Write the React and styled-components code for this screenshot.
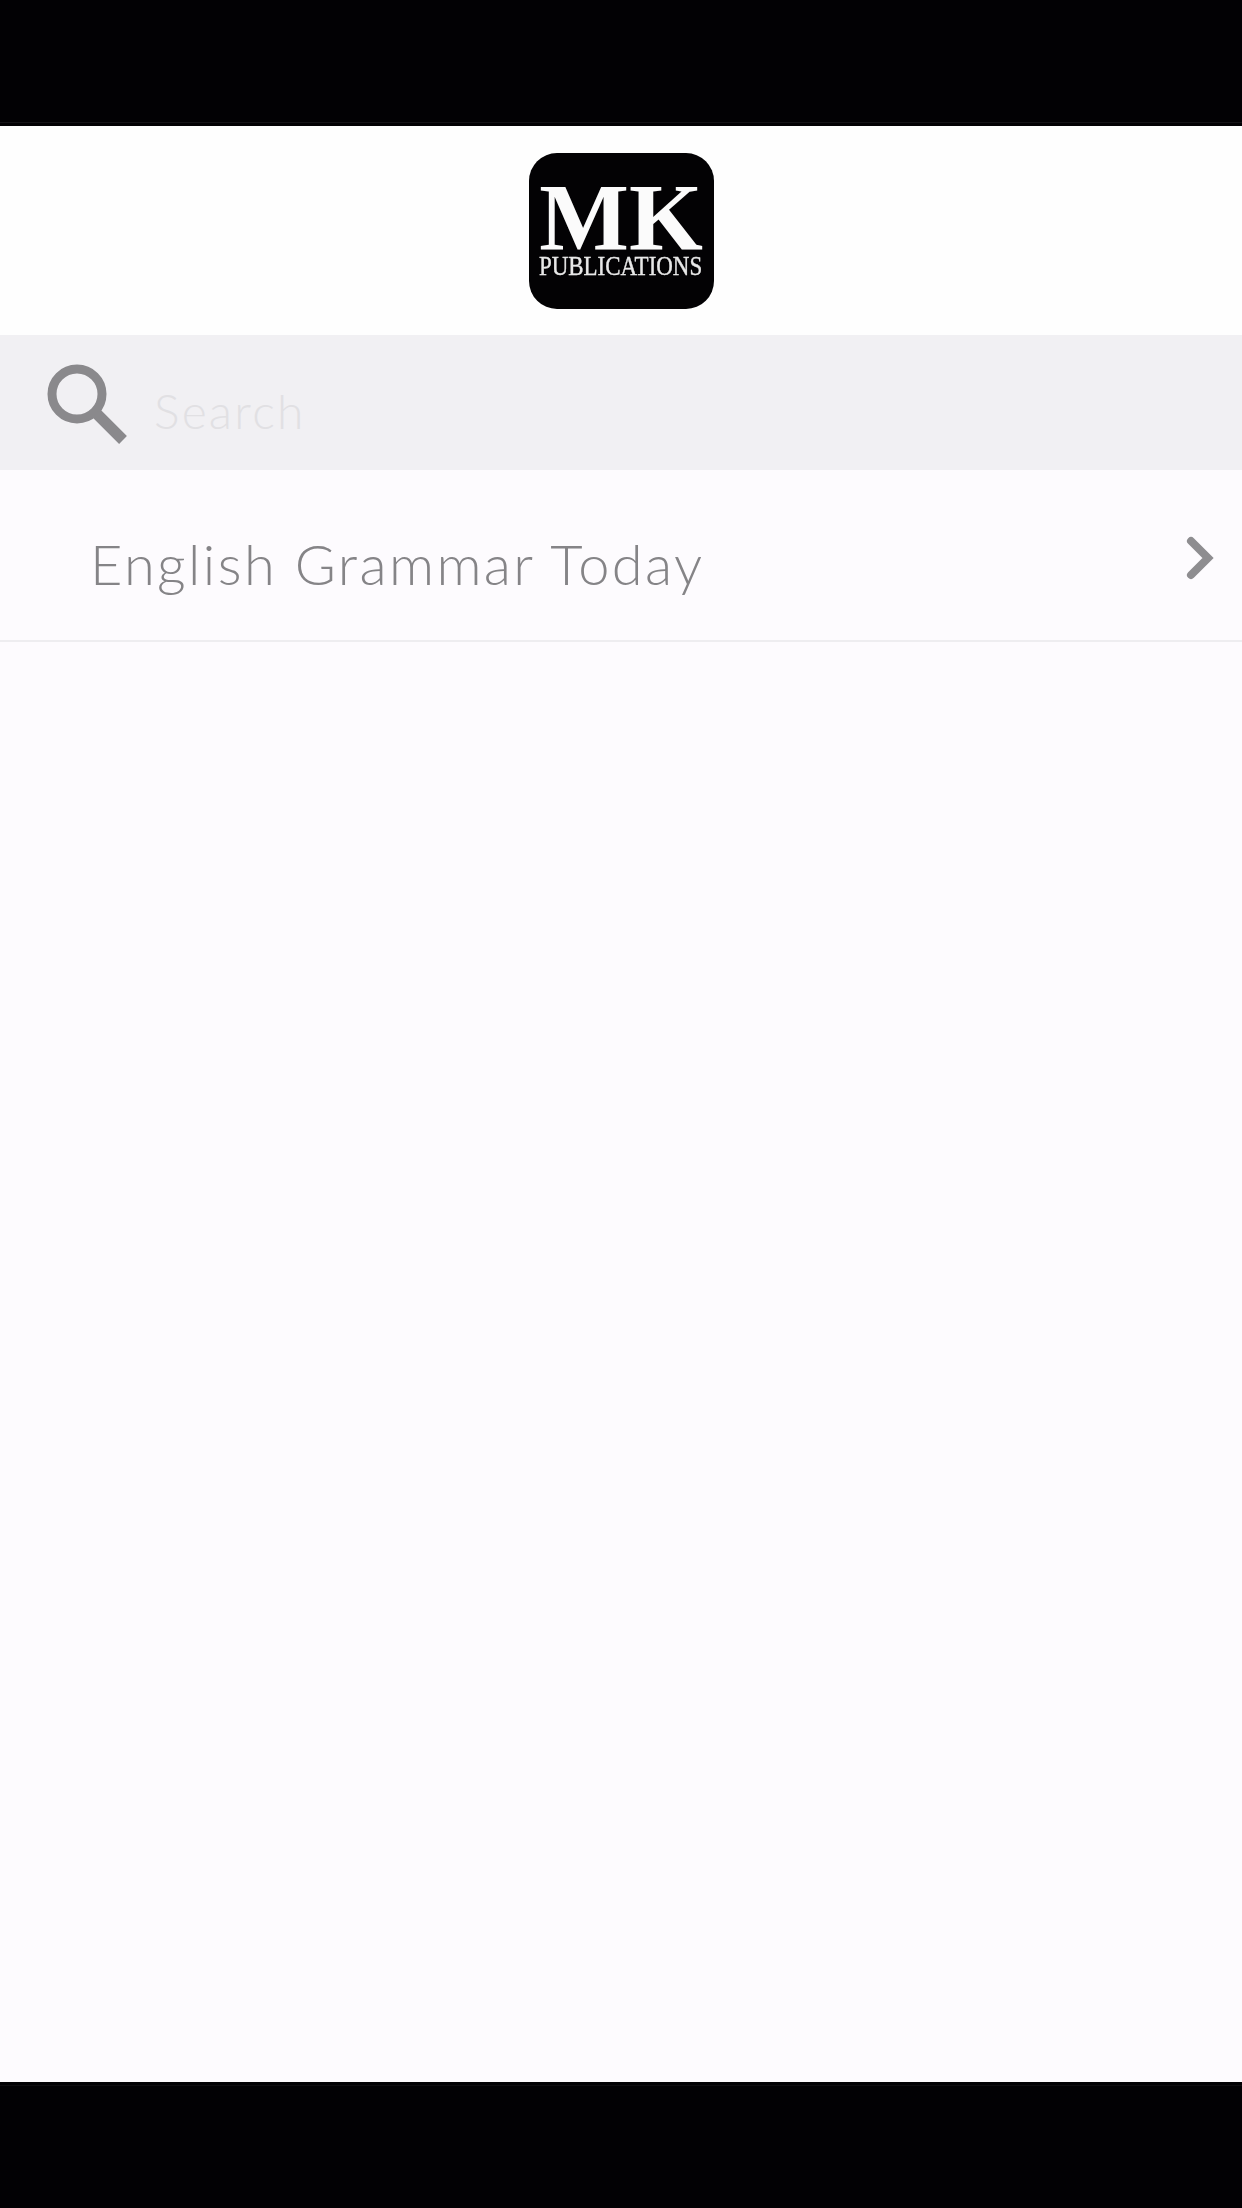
import styled, { createGlobalStyle } from "styled-components";

const GlobalStyle = createGlobalStyle`
  html, body {
    margin: 0;
    padding: 0;
    background: #020104;
  }
  * {
    box-sizing: border-box;
  }
`;

const Screen = styled.div`
  width: 1242px;
  height: 2208px;
  display: flex;
  flex-direction: column;
  background: #fdfbfe;
  font-family: "Lato", "Liberation Sans", sans-serif;
`;

const TopBar = styled.div`
  height: 126px;
  flex: none;
  background: #020104;
  padding-top: 122px;

  &::before {
    content: "";
    display: block;
    height: 1px;
    background: #141316;
  }
`;

const BottomBar = styled.div`
  height: 126px;
  flex: none;
  background: #020104;
  padding-top: 3px;

  &::before {
    content: "";
    display: block;
    height: 1px;
    background: #0e0d10;
  }
`;

const Header = styled.header`
  height: 209px;
  flex: none;
  display: flex;
  align-items: center;
  justify-content: center;
  background: #fefefe;
`;

const Logo = styled.div`
  width: 185px;
  height: 156px;
  margin-top: 1px;
  padding-top: 29px;
  border-radius: 28px;
  background: #030204;
  color: #fbfbfb;
  display: flex;
  flex-direction: column;
  align-items: center;
  font-family: "Liberation Serif", serif;
  white-space: nowrap;
  filter: blur(0.5px);
`;

const LogoMark = styled.div`
  font-size: 95px;
  font-weight: 700;
  line-height: 72px;
`;

const LogoName = styled.div`
  margin-top: -1px;
  font-size: 28px;
  line-height: 26px;
  color: #e8e8e8;
  -webkit-text-stroke: 0.4px #e8e8e8;
  transform: scaleX(0.82);
`;

const SearchBar = styled.div`
  height: 135px;
  flex: none;
  display: flex;
  align-items: flex-start;
  gap: 26px;
  padding: 28px 0 0 46px;
  background: #f1f0f3;
`;

const SearchPlaceholder = styled.div`
  margin-top: 19px;
  font-size: 48px;
  line-height: 58px;
  font-weight: 300;
  letter-spacing: 2.2px;
  color: #e1e0e3;
`;

const ListRow = styled.div`
  height: 172px;
  flex: none;
  display: flex;
  align-items: flex-start;
  justify-content: space-between;
  padding: 62px 26px 0 90px;
  border-bottom: 2px solid #eeedf0;
`;

const RowTitle = styled.div`
  font-size: 56px;
  line-height: 64px;
  font-weight: 300;
  letter-spacing: 2.4px;
  color: #858487;
`;

const Chevron = styled.svg`
  width: 32px;
  height: 44px;
  margin-top: 4px;
  flex: none;
`;

const Empty = styled.main`
  flex: 1;
`;

export default function App() {
  return (
    <Screen>
      <GlobalStyle />
      <TopBar />
      <Header>
        <Logo>
          <LogoMark>MK</LogoMark>
          <LogoName>PUBLICATIONS</LogoName>
        </Logo>
      </Header>
      <SearchBar>
        <svg width="82" height="82" viewBox="0 0 82 82" fill="none">
          <circle cx="31" cy="31" r="25" stroke="#8a898c" strokeWidth="9" />
          <path d="M50 50 L77 77" stroke="#8a898c" strokeWidth="11" />
        </svg>
        <SearchPlaceholder>Search</SearchPlaceholder>
      </SearchBar>
      <ListRow>
        <RowTitle>English Grammar Today</RowTitle>
        <Chevron viewBox="0 0 32 44" fill="none">
          <path
            d="M7 5 L24 22 L7 39"
            stroke="#8e8d90"
            strokeWidth="8"
            strokeLinecap="round"
            strokeLinejoin="miter"
          />
        </Chevron>
      </ListRow>
      <Empty />
      <BottomBar />
    </Screen>
  );
}
